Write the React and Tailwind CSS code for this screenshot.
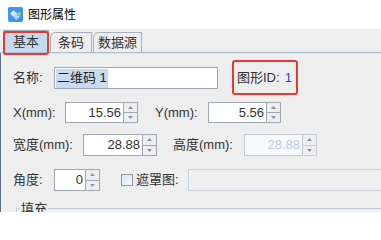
import React from 'react';

const font = { fontFamily: '"Liberation Sans", "Noto Sans CJK SC", sans-serif' };

const Arrow = ({ up }) => (
  <svg width="5" height="3" viewBox="0 0 5 3">
    <path d={up ? 'M0 3 L2.5 0 L5 3 Z' : 'M0 0 L2.5 3 L5 0 Z'} fill="#8c96a2" />
  </svg>
);

const Spinner = ({ disabled }) => (
  <div className={`w-[14px] h-full flex flex-col border border-l-0 ${disabled ? 'border-[#c3ccd6]' : 'border-[#9ea8b3]'} bg-[#eeeeee]`}>
    <div className={`flex-1 flex items-center justify-center border-b ${disabled ? 'border-[#c3ccd6]' : 'border-[#9ea8b3]'}`}>
      <Arrow up />
    </div>
    <div className="flex-1 flex items-center justify-center">
      <Arrow />
    </div>
  </div>
);

const NumField = ({ value, width, disabled }) => (
  <div className="flex h-full">
    <div
      className={`h-full flex items-center justify-end pr-[2px] border text-[13px] ${
        disabled ? 'bg-[#f8f9fb] border-[#c3ccd6] text-[#b9cde3]' : 'bg-white border-[#9ea8b3] text-[#333333]'
      }`}
      style={{ width }}
    >
      {value}
    </div>
    <Spinner disabled={disabled} />
  </div>
);

const Label = ({ children, w, className = '' }) => (
  <div className={`text-[13px] text-[#333333] shrink-0 ${className}`} style={{ width: w }}>
    {children}
  </div>
);

export default function App() {
  return (
    <div className="w-[381px] h-[212px] overflow-hidden bg-[#eeeeee] relative" style={font}>
      {/* title bar */}
      <div className="h-[29px] bg-white flex items-center pl-[8px] gap-[5px]">
        <div className="w-[15px] h-[15px] rounded-[2px] bg-[#3d95ee] relative">
          <div className="absolute left-[3px] top-[4px] w-[5px] h-[5px] rotate-45 bg-[#d8ecff]" />
          <div className="absolute left-[6px] top-[7px] w-[5px] h-[5px] rotate-45 bg-[#aed5fb]" />
          <div className="absolute left-[9px] top-[5px] w-[4px] h-[4px] rounded-full bg-[#8fd14f]" />
        </div>
        <span className="text-[12px] text-black">图形属性</span>
      </div>

      {/* tabs */}
      <div className="h-[23px] mt-[1px] flex items-end pl-[3px] border-b border-[#a9bfd6]">
        <div className="w-[46px] h-[22px] bg-[#c6daef] border border-b-0 border-[#9ea8b3] flex items-center justify-center text-[13px] text-[#333333]">
          基本
        </div>
        <div className="w-[42px] h-[20px] ml-[1px] bg-[#eeeeee] border border-b-0 border-[#a8b0ba] rounded-tl-[6px] flex items-center justify-center text-[13px] text-[#333333]">
          条码
        </div>
        <div className="w-[49px] h-[20px] ml-[1px] bg-[#eeeeee] border border-b-0 border-[#a8b0ba] rounded-tl-[6px] flex items-center justify-center text-[13px] text-[#333333]">
          数据源
        </div>
      </div>

      {/* content */}
      <div className="border-l border-[#5f6f85] border-t border-t-[#dbe5ef] h-[160px] pl-[12px] pt-[13px]">
        {/* row 1 */}
        <div className="flex items-center h-[22px]">
          <Label w={41}>名称:</Label>
          <div className="w-[164px] h-full bg-white border border-[#9ea8b3] flex items-center pl-[1px]">
            <span className="bg-[#c7dbf0] h-[19px] px-[1px] flex items-center text-[13px] text-[#222222]">二维码 1</span>
          </div>
          <div className="ml-[19px] text-[13px] text-[#333333]">图形ID:</div>
          <div className="ml-[5px] text-[13px] text-[#2f46c8]">1</div>
        </div>

        {/* row 2 */}
        <div className="flex items-center h-[21px] mt-[13px]">
          <Label w={52}>X(mm):</Label>
          <NumField value="15.56" width={59} />
          <Label w={53} className="ml-[17px]">Y(mm):</Label>
          <NumField value="5.56" width={59} />
        </div>

        {/* row 3 */}
        <div className="flex items-center h-[22px] mt-[11px]">
          <Label w={70}>宽度(mm):</Label>
          <NumField value="28.88" width={60} />
          <Label w={71} className="ml-[16px]">高度(mm):</Label>
          <NumField value="28.88" width={59} disabled />
        </div>

        {/* row 4 */}
        <div className="flex items-center h-[22px] mt-[13px]">
          <Label w={41}>角度:</Label>
          <NumField value="0" width={32} />
          <div className="ml-[21px] w-[12px] h-[12px] border border-[#8a9aae] bg-gradient-to-br from-[#dbe6f3] to-[#f5f8fc]" />
          <div className="ml-[3px] text-[13px] text-[#333333]">遮罩图:</div>
          <div className="ml-[9px] flex-1 h-full bg-[#eeeeee] border border-r-0 border-[#c3d0dc]" />
        </div>

        {/* fill group */}
        <div className="relative mt-[17px] ml-[3px] h-[20px] border-l border-t border-[#c0cedb]">
          <span className="absolute -top-[10px] left-[3px] px-[1px] bg-[#eeeeee] text-[13px] text-[#333333]">填充</span>
        </div>
      </div>

      {/* annotation highlights */}
      <div className="absolute left-[3px] top-[31px] w-[46px] h-[24px] border-2 border-[#e53935] rounded-[3px]" />
      <div className="absolute left-[232px] top-[60px] w-[66px] h-[35px] border-2 border-[#e53935] rounded-[3px]" />
    </div>
  );
}
